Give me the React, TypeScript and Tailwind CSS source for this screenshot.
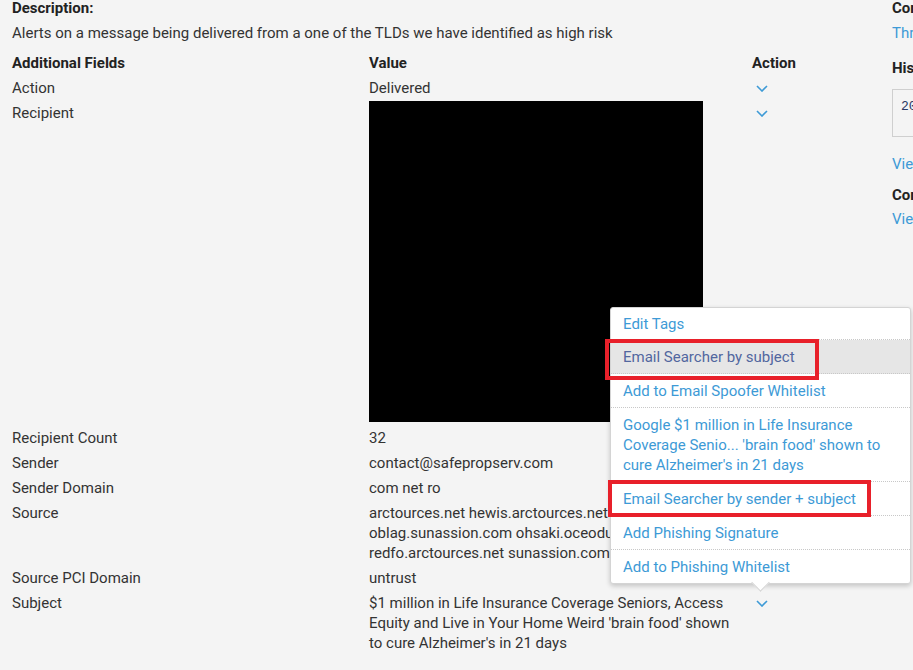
import React from "react";

const Chevron = () => (
  <svg width="12" height="7" viewBox="0 0 12 7" className="block">
    <polyline points="1,1 6,6 11,1" fill="none" stroke="#3d9ad6" strokeWidth="1.6" />
  </svg>
);

type Row = { label: string; value: React.ReactNode; chevron?: boolean };

const rows: Row[] = [
  { label: "Action", value: "Delivered", chevron: true },
  {
    label: "Recipient",
    value: <div className="mb-[1px] mt-[-2px] h-[321px] w-[334px] bg-black" />,
    chevron: true,
  },
  { label: "Recipient Count", value: "32" },
  { label: "Sender", value: "contact@safepropserv.com" },
  { label: "Sender Domain", value: "com net ro" },
  {
    label: "Source",
    value: (
      <div className="whitespace-nowrap">
        arctources.net hewis.arctources.net lasto.net
        <br />
        oblag.sunassion.com ohsaki.oceodunes.com
        <br />
        redfo.arctources.net sunassion.com
      </div>
    ),
  },
  { label: "Source PCI Domain", value: "untrust" },
  {
    label: "Subject",
    value:
      "$1 million in Life Insurance Coverage Seniors, Access Equity and Live in Your Home Weird 'brain food' shown to cure Alzheimer's in 21 days",
    chevron: true,
  },
];

const menuItems: { text: React.ReactNode; active?: boolean; first?: boolean }[] = [
  { text: "Edit Tags", first: true },
  { text: "Email Searcher by subject", active: true },
  { text: "Add to Email Spoofer Whitelist" },
  {
    text: (
      <>
        Google $1 million in Life Insurance
        <br />
        Coverage Senio... 'brain food' shown to
        <br />
        cure Alzheimer's in 21 days
      </>
    ),
  },
  { text: "Email Searcher by sender + subject" },
  { text: "Add Phishing Signature" },
  { text: "Add to Phishing Whitelist" },
];

export default function App() {
  return (
    <div
      className="relative h-[670px] w-[913px] overflow-hidden bg-[#f4f4f4] text-[15px] text-[#333]"
      style={{ fontFamily: "Roboto, 'Liberation Sans', sans-serif" }}
    >
      <div className="flex">
        {/* main */}
        <div className="w-[880px] shrink-0 pl-3">
          <div className="h-4 font-bold leading-4 text-[#222]">Description:</div>
          <p className="mt-[7px] leading-5">
            Alerts on a message being delivered from a one of the TLDs we have identified as high risk
          </p>
          <div className="mt-[7.5px]">
            <div className="grid grid-cols-[357px_383px_1fr] py-[2.5px] font-bold leading-5 text-[#222]">
              <div>Additional Fields</div>
              <div>Value</div>
              <div>Action</div>
            </div>
            {rows.map((r) => (
              <div
                key={r.label}
                className="grid grid-cols-[357px_383px_1fr] py-[2.5px] leading-5"
              >
                <div>{r.label}</div>
                <div className="w-[372px]">{r.value}</div>
                <div className="pl-[4px] pt-[7px]">{r.chevron ? <Chevron /> : null}</div>
              </div>
            ))}
          </div>
        </div>
        {/* right panel */}
        <div className="ml-3 w-[240px] shrink-0">
          <div className="h-4 font-bold leading-4 text-[#222]">Context</div>
          <div className="mt-[7px] leading-5 text-[#3d9ad6]">Threat Intel</div>
          <div className="mt-[15px] font-bold leading-5 text-[#222]">History</div>
          <div className="mt-[11px] h-[48px] border border-[#cfcfcf] px-2 pt-[7px] font-mono text-[13px] leading-5 text-[#2a3a64]">
            2023-01-01
          </div>
          <div className="mt-[17px] leading-5 text-[#3d9ad6]">View all</div>
          <div className="mt-[11px] font-bold leading-5 text-[#222]">Comments</div>
          <div className="mt-[4px] leading-5 text-[#3d9ad6]">View all</div>
        </div>
      </div>

      {/* dropdown menu */}
      <div className="absolute left-[610px] top-[307px] w-[301px] rounded-[3px] border border-[#d4d4d4] bg-white shadow-[0_2px_5px_rgba(0,0,0,0.2)]">
        {menuItems.map((m, i) => (
          <div
            key={i}
            className={
              (m.first ? "py-[5.5px] " : "py-[6.5px] ") +
              (i < menuItems.length - 1 ? "border-b border-dotted border-[#c8c8c8] " : "") +
              (m.active ? "bg-[#e6e6e6] text-[#52679f] " : "text-[#3d9ad6] ") +
              "px-3 leading-5"
            }
          >
            {m.text}
          </div>
        ))}
        <div className="absolute left-[143px] top-[268px] h-[13px] w-[13px] rotate-45 border-b border-r border-[#d4d4d4] bg-white" />
      </div>

      {/* red annotation boxes */}
      <div className="absolute left-[605px] top-[339px] h-[41px] w-[214px] border-[4px] border-[#e8202a]" />
      <div className="absolute left-[608px] top-[480px] h-[37px] w-[263px] border-[4px] border-[#e8202a]" />
    </div>
  );
}
